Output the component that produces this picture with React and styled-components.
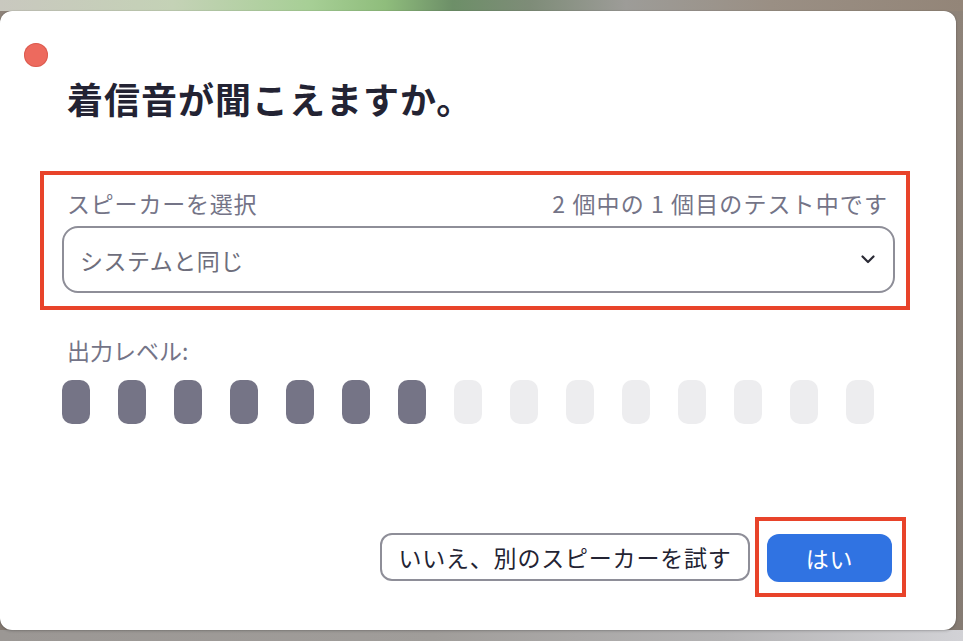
import React from "react";
import styled, { createGlobalStyle } from "styled-components";

const Global = createGlobalStyle`
  html, body { margin: 0; padding: 0; }
  body {
    font-family: "Noto Sans CJK JP", "Noto Sans", sans-serif;
    -webkit-font-smoothing: antialiased;
  }
`;

const Backdrop = styled.div`
  width: 963px;
  height: 641px;
  box-sizing: border-box;
  padding: 11px 7px 11px 0;
  background:
    linear-gradient(90deg, #c9c8bf 0%, #c4d2b6 18%, #a7cf96 32%, #8fbd7c 40%, #6d8f68 47%, #7e8c78 55%, #9d9c98 65%, #9a8f84 80%, #938578 100%) top / 100% 11px no-repeat,
    linear-gradient(90deg, #9b9794 0%, #a09d9a 45%, #b4b3b4 75%, #d2d2d6 100%) bottom / 100% 11px no-repeat,
    linear-gradient(180deg, #8e8379 0%, #857b73 100%);
  overflow: hidden;
`;

const Window = styled.div`
  height: 100%;
  background: #ffffff;
  border-radius: 12px;
  box-shadow: 0 0 1px rgba(0, 0, 0, 0.35), 0 1px 3px rgba(0, 0, 0, 0.2);
  display: flex;
  flex-direction: column;
`;

const CloseDot = styled.span`
  display: block;
  width: 24px;
  height: 24px;
  border-radius: 50%;
  background: #ed6a5e;
  box-shadow: inset 0 0 0 1px rgba(200, 70, 60, 0.45);
  margin: 32px 0 0 24px;
`;

const Title = styled.h1`
  margin: 11px 0 0 67px;
  font-size: 36px;
  line-height: 40px;
  font-weight: 700;
  color: #232333;
  letter-spacing: 1px;
`;

const Highlight = styled.div`
  border: 4px solid #e8432a;
  box-sizing: border-box;
  display: flex;
  flex-direction: column;
  margin: ${(p) => p.$margin || "0"};
  padding: ${(p) => p.$padding || "0"};
`;

const SpeakerBox = styled(Highlight)`
  width: 870px;
  gap: 10px;
`;

const LabelRow = styled.div`
  display: flex;
  justify-content: space-between;
  align-items: center;
  padding: 0 7px 0 5px;
`;

const Label = styled.span`
  font-size: 23px;
  line-height: 26px;
  color: #747487;
  letter-spacing: ${(p) => p.$spacing || "0"};
`;

const Select = styled.div`
  height: 67px;
  box-sizing: border-box;
  border: 2px solid #8e8e98;
  border-radius: 16px;
  display: flex;
  align-items: center;
  justify-content: space-between;
  padding: 0 18px 0 16px;
`;

const SelectValue = styled.span`
  font-size: 23px;
  color: #6e6e7c;
  letter-spacing: 0.5px;
`;

const LevelSection = styled.div`
  display: flex;
  flex-direction: column;
  gap: 17px;
  margin: 27px 0 0 62px;
`;

const LevelLabel = styled(Label)`
  padding-left: 5px;
`;

const Bars = styled.div`
  display: flex;
  gap: 28px;
`;

const Bar = styled.span`
  width: 28px;
  height: 44px;
  border-radius: 10px;
  background: ${(p) => (p.$on ? "#757486" : "#ededef")};
`;

const Footer = styled.div`
  margin-top: auto;
  display: flex;
  justify-content: flex-end;
  align-items: center;
  gap: 5px;
  padding: 0 50px 33px 0;
`;

const Button = styled.button`
  height: 48px;
  box-sizing: border-box;
  border-radius: 12px;
  font-family: inherit;
  font-size: 23px;
  cursor: pointer;
  letter-spacing: 0.8px;
`;

const OutlineButton = styled(Button)`
  width: 370px;
  background: #ffffff;
  border: 2px solid #8e8e98;
  color: #232333;
  padding: 0;
`;

const PrimaryButton = styled(Button)`
  width: 125px;
  background: #3073e2;
  border: none;
  color: #ffffff;
`;

const Chevron = () => (
  <svg width="14" height="9" viewBox="0 0 14 9" fill="none">
    <path d="M1.5 1.5 L7 7 L12.5 1.5" stroke="#2a2a35" strokeWidth="2.2" strokeLinecap="round" strokeLinejoin="round" />
  </svg>
);

const levels = Array.from({ length: 15 }, (_, i) => i < 7);

export default function App() {
  return (
    <Backdrop>
      <Global />
      <Window>
        <CloseDot />
        <Title>着信音が聞こえますか。</Title>
        <SpeakerBox $margin="53px 0 0 40px" $padding="15px 11px 13px 18px">
          <LabelRow>
            <Label $spacing="0.8px">スピーカーを選択</Label>
            <Label $spacing="1.1px">2 個中の 1 個目のテスト中です</Label>
          </LabelRow>
          <Select>
            <SelectValue>システムと同じ</SelectValue>
            <Chevron />
          </Select>
        </SpeakerBox>
        <LevelSection>
          <LevelLabel>出力レベル:</LevelLabel>
          <Bars>
            {levels.map((on, i) => (
              <Bar key={i} $on={on} />
            ))}
          </Bars>
        </LevelSection>
        <Footer>
          <OutlineButton>いいえ、別のスピーカーを試す</OutlineButton>
          <Highlight $padding="13px 10px 11px 8px">
            <PrimaryButton>はい</PrimaryButton>
          </Highlight>
        </Footer>
      </Window>
    </Backdrop>
  );
}
